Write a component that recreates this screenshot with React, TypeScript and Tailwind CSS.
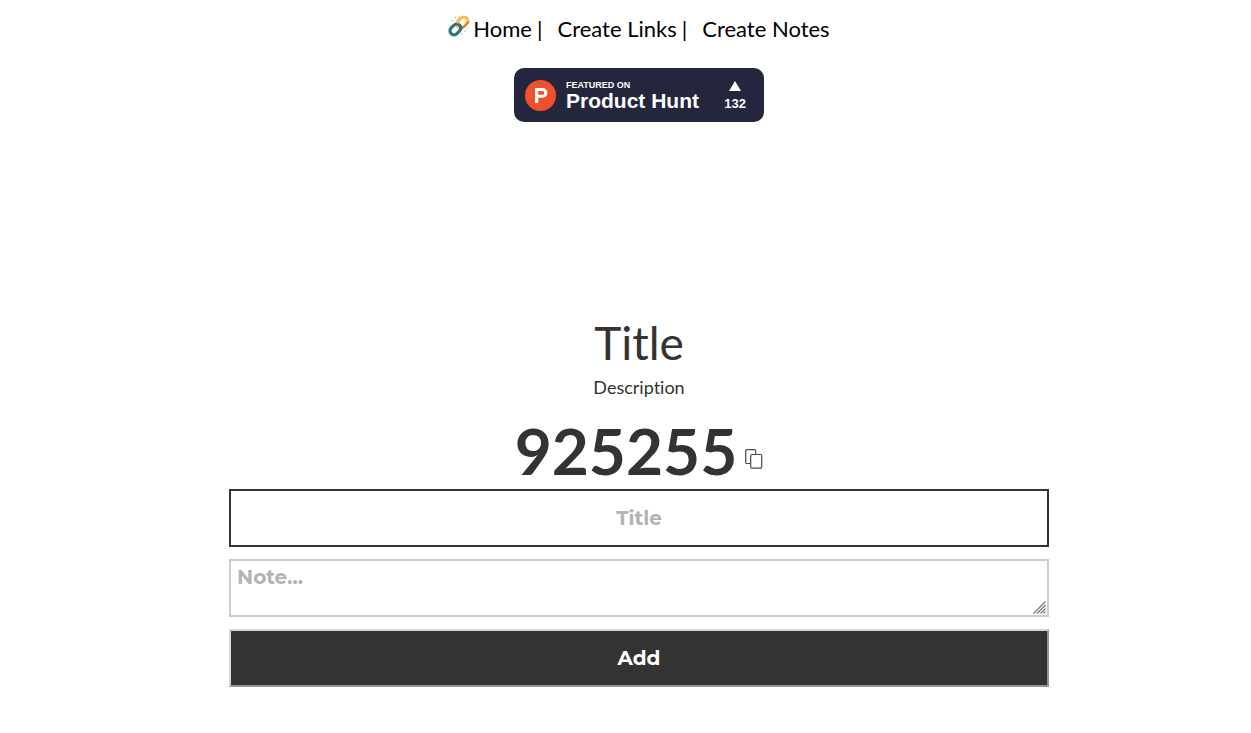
import React, { useState } from 'react';

const NAV_LINKS = [
  { label: 'Home', href: '#home' },
  { label: 'Create Links', href: '#links' },
  { label: 'Create Notes', href: '#notes' },
];

const CODE = '925255';

function ChainIcon() {
  return (
    <svg width="22" height="22" viewBox="0 0 22 22" fill="none" aria-hidden="true">
      <g stroke="#d3d3cc" strokeWidth="1.2">
        <path d="M7 1.5l1 3M3 5l2.5 1.5M11 1v2M1 10h2M14 20l-.5-2.5M18 17l-2-1.5M21 13h-2" />
      </g>
      <rect x="-6" y="-4" width="12" height="8" rx="4" transform="translate(14.4 7.4) rotate(-45)" stroke="#f6bd4a" strokeWidth="3.2" />
      <path d="M20.5 7l-5.800 6" stroke="#e8602f" strokeWidth="1.600" strokeLinecap="round" />
      <rect x="-6" y="-4" width="12" height="8" rx="4" transform="translate(7.4 14.4) rotate(-45)" stroke="#2b7483" strokeWidth="3.2" />
      <path d="M8.600 7.800l3-3" stroke="#f6bd4a" strokeWidth="3.2" />
    </svg>
  );
}

function CopyIcon() {
  return (
    <svg width="18" height="20" viewBox="0 0 18 20" fill="none" stroke="#4a4a4a" strokeWidth="1.2" aria-hidden="true">
      <path d="M5.5 14.5H2a1.3 1.3 0 0 1-1.3-1.3V2A1.3 1.3 0 0 1 2 .7h7.4A1.3 1.3 0 0 1 10.7 2v3.5" />
      <rect x="5.7" y="5.5" width="11" height="13.7" rx="1.3" />
    </svg>
  );
}

function ProductHuntBadge() {
  return (
    <a
      href="#product-hunt"
      className="flex h-[54px] w-[250px] items-center rounded-[10px] bg-[#24263e] pl-[11px] pr-[18px] font-['Liberation_Sans',Arial,sans-serif] font-bold text-white"
    >
      <svg width="31" height="31" viewBox="0 0 31 31" aria-hidden="true">
        <circle cx="15.5" cy="15.5" r="15.5" fill="#ee512b" />
        <path fill="#fff" fillRule="evenodd" d="M10 8h7.5a4.9 4.9 0 0 1 0 9.8h-4.3V23H10V8zm3.2 3v3.8h4.2a1.9 1.9 0 0 0 0-3.8h-4.2z" />
      </svg>
      <span className="ml-[10px] flex flex-col pt-0.5">
        <span className="text-[9px] leading-[10px]">FEATURED ON</span>
        <span className="text-[21px] leading-[22px]">Product Hunt</span>
      </span>
      <span className="ml-auto flex flex-col items-center gap-1 pt-1">
        <svg width="12" height="10" viewBox="0 0 12 10" aria-hidden="true">
          <path fill="#fff" d="M6 0l6 10H0z" />
        </svg>
        <span className="text-[13px] leading-[18px]">132</span>
      </span>
    </a>
  );
}

export default function App() {
  const [title, setTitle] = useState('');
  const [note, setNote] = useState('');

  const handleSubmit = (e: React.FormEvent) => {
    e.preventDefault();
    setTitle('');
    setNote('');
  };

  return (
    <div className="flex min-h-screen flex-col items-center bg-white pl-[27px] font-[Lato,sans-serif] text-[#333] [font-variant-ligatures:none]">
      {/* Navigation */}
      <nav className="flex h-14 items-center text-[22px] text-black">
        <span className="mr-[3px] mb-1">
          <ChainIcon />
        </span>
        {NAV_LINKS.map((link, i) => (
          <React.Fragment key={link.href}>
            {i > 0 && <span className="mr-[15px] ml-[5px]">|</span>}
            <a href={link.href}>{link.label}</a>
          </React.Fragment>
        ))}
      </nav>

      <div className="mt-3">
        <ProductHuntBadge />
      </div>

      {/* Heading */}
      <h1 className="mt-[193px] text-[46px] leading-[56px]">Title</h1>
      <p className="mt-1 text-[18px] leading-6">Description</p>
      <div className="mt-[14px] flex items-end gap-2">
        <span className="text-[64px] leading-[76px] font-bold">{CODE}</span>
        <button
          type="button"
          aria-label="Copy code"
          className="mb-5"
          onClick={() => navigator.clipboard?.writeText(CODE)}
        >
          <CopyIcon />
        </button>
      </div>

      {/* Note form */}
      <form
        onSubmit={handleSubmit}
        className="flex w-full max-w-[820px] flex-col gap-3 font-[Montserrat,'Open_Sans',sans-serif] text-xl font-bold"
      >
        <input
          type="text"
          aria-label="Title"
          placeholder="Title"
          value={title}
          onChange={(e) => setTitle(e.target.value)}
          className="h-[58px] border-2 border-[#333] text-center outline-none placeholder:text-[#b3b3b3]"
        />
        <div className="relative flex">
          <textarea
            aria-label="Note"
            placeholder="Note..."
            value={note}
            onChange={(e) => setNote(e.target.value)}
            className="h-[58px] w-full resize-y border-2 border-[#ccc] px-1.5 py-0.5 outline-none placeholder:text-[#b3b3b3] [&::-webkit-resizer]:hidden"
          />
          {/* Resize grip */}
          <svg
            className="pointer-events-none absolute right-0.5 bottom-0.5"
            width="14"
            height="14"
            viewBox="0 0 14 14"
            stroke="#777"
            strokeWidth="1.2"
            aria-hidden="true"
          >
            <path d="M.5 12.500l12-12M4 12.500l8.500-8.500M7.500 12.500l5-5M10.500 12.500l2-2" />
          </svg>
        </div>
        <button
          type="submit"
          className="h-[58px] border-2 border-t-[#d6d6d6] border-r-[#949494] border-b-[#949494] border-l-[#d6d6d6] bg-[#333] text-white"
        >
          Add
        </button>
      </form>
    </div>
  );
}
